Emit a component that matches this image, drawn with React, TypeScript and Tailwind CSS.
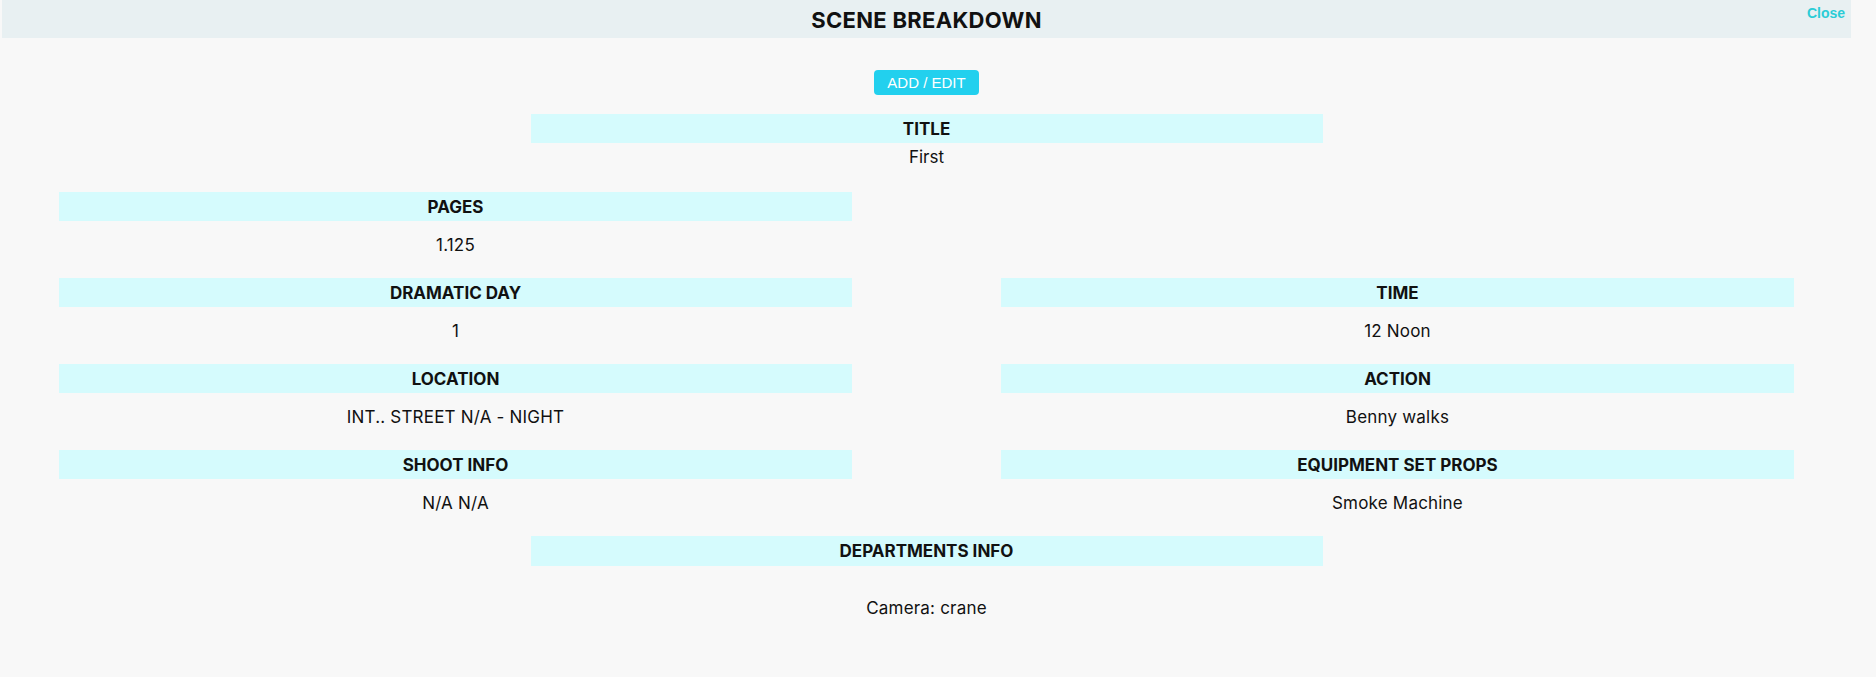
import React from "react";

const font = { fontFamily: "Inter, 'Noto Sans', sans-serif" };

function Cell({ label, value }: { label?: string; value?: string }) {
  if (!label) return <div />;
  return (
    <div className="flex flex-col">
      <div className="h-[29px] pt-[2px] bg-[#d5fbfd] flex items-center justify-center text-[17px] font-bold text-[#111]">
        {label}
      </div>
      <div className="mt-[11px] pt-[1px] leading-[25px] text-[17px] text-center text-[#111] tracking-[0.2px]">{value}</div>
    </div>
  );
}

export default function App() {
  return (
    <div className="min-h-[677px] bg-[#f8f8f8]" style={font}>
      <div className="ml-[2px] w-[1849px]">
        <div className="relative h-[38px] bg-[#e8f0f2] flex items-center justify-center">
          <h1 className="pt-[2px] text-[22px] font-bold text-[#111] tracking-[0.3px]">SCENE BREAKDOWN</h1>
          <button
            className="absolute right-[6px] top-[3px] text-[14px] font-bold text-[#2bccd6]"
            style={{ fontFamily: "'Liberation Sans', Arial, sans-serif" }}
          >
            Close
          </button>
        </div>

        <div className="flex justify-center pt-[32px]">
          <button
            className="h-[25px] w-[105px] rounded-[4px] bg-[#22d0ee] text-white text-[15px] leading-[25px]"
            style={{ fontFamily: "'Liberation Sans', Arial, sans-serif" }}
          >
            ADD / EDIT
          </button>
        </div>

        <div className="mt-[19px] mx-auto w-[792px]">
          <div className="h-[29px] pt-[2px] bg-[#d5fbfd] flex items-center justify-center text-[17px] font-bold text-[#111]">
            TITLE
          </div>
          <div className="pt-[1px] leading-[26px] text-[17px] text-center text-[#111]">First</div>
        </div>

        <div className="mt-[22px] px-[57px] grid grid-cols-2 gap-x-[149px] gap-y-[20px]">
          <Cell label="PAGES" value="1.125" />
          <Cell />
          <Cell label="DRAMATIC DAY" value="1" />
          <Cell label="TIME" value="12 Noon" />
          <Cell label="LOCATION" value="INT.. STREET N/A - NIGHT" />
          <Cell label="ACTION" value="Benny walks" />
          <Cell label="SHOOT INFO" value="N/A N/A" />
          <Cell label="EQUIPMENT SET PROPS" value="Smoke Machine" />
        </div>

        <div className="mt-[20px] mx-auto w-[792px]">
          <div className="h-[30px] pt-[2px] bg-[#d5fbfd] flex items-center justify-center text-[17px] font-bold text-[#111]">
            DEPARTMENTS INFO
          </div>
          <div className="mt-[29px] leading-[26px] text-[17px] text-center text-[#111] tracking-[0.2px]">Camera: crane</div>
        </div>
      </div>
    </div>
  );
}
